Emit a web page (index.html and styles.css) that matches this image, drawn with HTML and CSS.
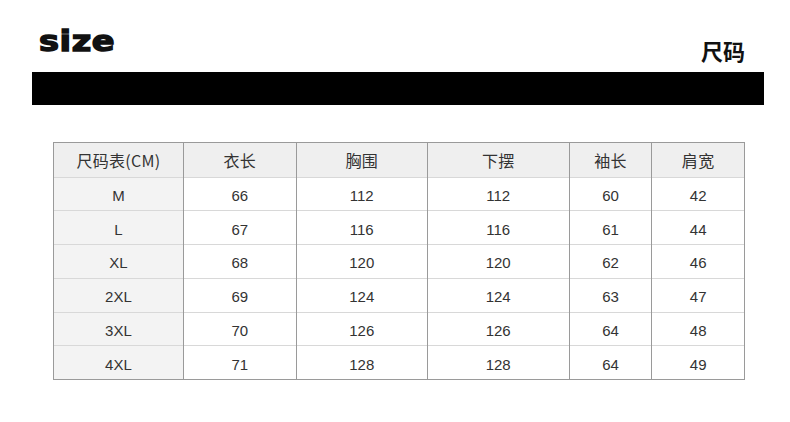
FILE: index.html
```html
<!DOCTYPE html>
<html lang="zh">
<head>
<meta charset="utf-8">
<link rel="stylesheet" href="styles.css">
</head>
<body>
<div class="page">
  <header class="head">
    <div class="logo">size</div>
    <div class="title">尺码</div>
  </header>
  <div class="bar"></div>
  <table class="sizes">
    <colgroup>
      <col class="c1"><col class="c2"><col class="c3"><col class="c4"><col class="c5"><col class="c6">
    </colgroup>
    <thead>
      <tr><th>尺码表(CM)</th><th>衣长</th><th>胸围</th><th>下摆</th><th>袖长</th><th>肩宽</th></tr>
    </thead>
    <tbody>
      <tr><th>M</th><td>66</td><td>112</td><td>112</td><td>60</td><td>42</td></tr>
      <tr><th>L</th><td>67</td><td>116</td><td>116</td><td>61</td><td>44</td></tr>
      <tr><th>XL</th><td>68</td><td>120</td><td>120</td><td>62</td><td>46</td></tr>
      <tr><th>2XL</th><td>69</td><td>124</td><td>124</td><td>63</td><td>47</td></tr>
      <tr><th>3XL</th><td>70</td><td>126</td><td>126</td><td>64</td><td>48</td></tr>
      <tr><th>4XL</th><td>71</td><td>128</td><td>128</td><td>64</td><td>49</td></tr>
    </tbody>
  </table>
</div>
</body>
</html>
```

FILE: styles.css
```css
html, body {
  margin: 0;
  padding: 0;
  background: #fff;
}
.page {
  width: 790px;
  height: 422px;
  padding: 0 26px 0 32px;
  box-sizing: border-box;
  font-family: "Liberation Sans", "Noto Sans CJK SC", sans-serif;
  color: #222;
}
.head {
  display: flex;
  justify-content: space-between;
  align-items: flex-end;
  height: 72px;
}
.logo {
  font-family: "DejaVu Sans", sans-serif;
  font-weight: 700;
  font-size: 28px;
  line-height: 28px;
  letter-spacing: 0.5px;
  color: #111;
  -webkit-text-stroke: 1.4px #111;
  margin-left: 7px;
  margin-bottom: 16px;
  transform: scale(1.2, 0.98);
  transform-origin: left bottom;
}
.title {
  font-family: "Noto Sans CJK SC", sans-serif;
  font-weight: 700;
  font-size: 22px;
  line-height: 22px;
  color: #111;
  margin-right: 19px;
  margin-bottom: 11px;
}
.bar {
  height: 33px;
  background: #000;
}
.sizes {
  margin: 37px 0 0 21px;
  border-collapse: collapse;
  table-layout: fixed;
  width: 692px;
  font-size: 15px;
  color: #333;
}
.c1 { width: 129px; }
.c2 { width: 112px; }
.c3 { width: 130px; }
.c4 { width: 141px; }
.c5 { width: 82px; }
.c6 { width: 92px; }
.sizes th, .sizes td {
  text-align: center;
  font-weight: normal;
  border-left: 1px solid #9a9a9a;
  border-right: 1px solid #9a9a9a;
  border-top: 1px solid #d8d8d8;
  padding: 3px 0 0;
  height: 29.8px;
}
.sizes thead th {
  background: #efefef;
  padding: 0;
  height: 33.5px;
  border-top: 1px solid #9a9a9a;
  font-family: "Noto Sans CJK SC", sans-serif;
  font-size: 16px;
  letter-spacing: 0.3px;
  color: #333;
}
.sizes tbody th {
  background: #f3f3f3;
}
.sizes tbody tr:last-child th, .sizes tbody tr:last-child td {
  border-bottom: 1px solid #9a9a9a;
}
```
